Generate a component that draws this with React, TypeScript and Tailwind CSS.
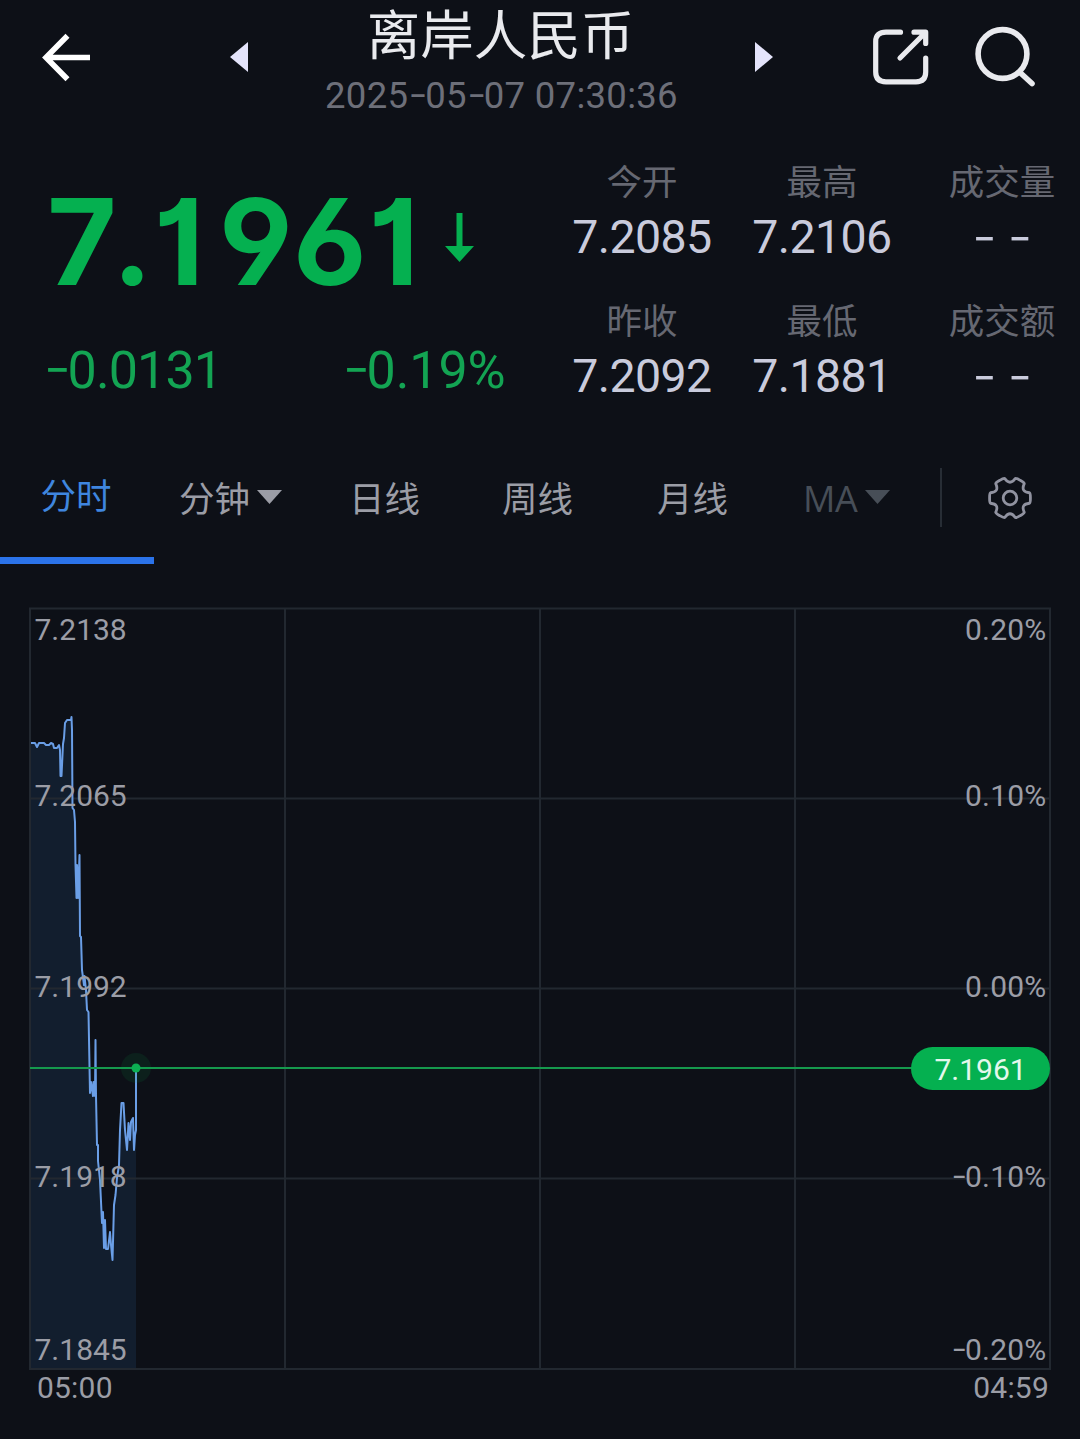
import type { ReactNode } from 'react';

const cjk = "font-['Noto_Sans_CJK_SC',sans-serif]";

/** Numeric text; minus signs use a wider, lighter dash than the digit face has. */
function Num({ text, className = '' }: { text: string; className?: string }) {
  return (
    <span className={`block whitespace-nowrap font-[Roboto,sans-serif] ${className}`}>
      {text.split(/(-)/).map((part, i) =>
        part === '-' ? (
          <span key={i} className="inline-block translate-y-[0.02em] font-[Inter,sans-serif] text-[1.18em] leading-[0.7] font-light tracking-[-0.06em]">-</span>
        ) : (
          part
        ),
      )}
    </span>
  );
}

function Header() {
  return (
    <header className="flex h-[130px] items-start pl-[41px]">
      <svg className="mt-[33px] h-[49px] w-[49px] shrink-0" viewBox="0 0 49 49" fill="none" stroke="#fff" strokeWidth="5.6">
        <path d="M26.5 2.8 5 24.5l21.5 21.7M5 24.5h44" />
      </svg>
      <svg className="mt-[42px] ml-[140px] h-[30px] w-[19px] shrink-0" viewBox="0 0 19 30" fill="#e4e4fb">
        <path d="M0 15 18 0v30z" />
      </svg>
      <div className="flex w-[505px] shrink-0 flex-col items-center">
        <h1 className={`mt-[5px] mr-[2px] text-[53.5px] leading-[53px] text-[#e9eaee] ${cjk}`}>离岸人民币</h1>
        <Num text="2025-05-07 07:30:36" className="mt-[19px] text-[36.5px] leading-[37px] tracking-[0.3px] text-[#6d6f79]" />
      </div>
      <svg className="mt-[42px] h-[30px] w-[19px] shrink-0" viewBox="0 0 19 30" fill="#e4e4fb">
        <path d="M19 15 1 0v30z" />
      </svg>
      <svg className="mt-[29px] ml-[100px] h-[56px] w-[56px] shrink-0" viewBox="0 0 56 56" fill="none" stroke="#e9eaee" strokeWidth="5.2" strokeLinecap="round" strokeLinejoin="round">
        <path d="M27.500 3.200H13Q2.700 3.200 2.700 12.500V43Q2.700 52.800 13 52.800H43Q52.700 52.800 52.700 43V29" />
        <path d="M41 3.200H52.700V14.500M52 4 27 29" />
      </svg>
      <svg className="mt-[26px] ml-[46px] h-[62px] w-[62px] shrink-0" viewBox="0 0 62 62" fill="none" stroke="#e9eaee" strokeWidth="5.6" strokeLinecap="round">
        <circle cx="27.500" cy="28" r="24.400" />
        <path d="M45 46.500 57 57.500" />
      </svg>
    </header>
  );
}

const stats = [
  ['今开', '7.2085'],
  ['最高', '7.2106'],
  ['成交量', '- -'],
  ['昨收', '7.2092'],
  ['最低', '7.1881'],
  ['成交额', '- -'],
];

function Quote() {
  return (
    <section className="flex h-[320px]">
      <div className="w-[552px] shrink-0 text-[#05b050]">
        <div className="mt-[52px] flex items-start pl-[47px]">
          <div className="font-[Inter,sans-serif] text-[120px] leading-[120px] font-bold whitespace-nowrap [font-feature-settings:'ss01','cv01']">
            <span className="tracking-[-4.500px]">7</span>
            <span className="tracking-[1px]">.</span>
            <span className="tracking-[15px]">1</span>
            <span className="tracking-[1.5px]">961</span>
          </div>
          <svg className="mt-[31px] ml-[25px] h-[49px] w-[29px]" viewBox="0 0 29 49" fill="#05b050">
            <path d="M11.500 0h6v33H29L14.500 49 0 33h11.500z" />
          </svg>
        </div>
        <div className="mt-[43px] flex pl-[43.5px] text-[#13a453]">
          <Num text="-0.0131" className="w-[299px] text-[52px] leading-[52px] tracking-[-0.9px]" />
          <Num text="-0.19%" className="text-[52px] leading-[52px] tracking-[-0.1px]" />
        </div>
      </div>
      <div className="mt-[32px] grid w-[540px] shrink-0 grid-cols-3 grid-rows-[139px_139px]">
        {stats.map(([label, value], i) => (
          <div key={i} className="flex flex-col items-center">
            <span className={`text-[35.5px] leading-[36px] text-[#666872] ${cjk}`}>{label}</span>
            <Num
              text={value}
              className={`mt-[16px] text-[46.5px] leading-[46px] tracking-[-0.6px] text-[#c9cbdc] ${value === '- -' ? 'translate-y-[2px] pr-[3px] [word-spacing:3px]' : ''}`}
            />
          </div>
        ))}
      </div>
    </section>
  );
}

function Caret({ className }: { className: string }) {
  return (
    <svg className={`h-[14px] w-[25px] shrink-0 ${className}`} viewBox="0 0 25 14" fill="currentColor">
      <path d="M0 0h25L12.500 14z" />
    </svg>
  );
}

function Tab({ children, className }: { children: ReactNode; className: string }) {
  return <div className={`flex shrink-0 text-[35.5px] leading-[36px] whitespace-nowrap ${cjk} ${className}`}>{children}</div>;
}

/** Outline of the six-tooth settings cog, centred on the origin. */
function cogPath() {
  const at = (deg: number, r: number) => {
    const a = (deg * Math.PI) / 180;
    return `${(Math.cos(a) * r).toFixed(2)} ${(Math.sin(a) * r).toFixed(2)}`;
  };
  let d = `M${at(-15, 20.2)}`;
  for (let k = 0; k < 6; k++) {
    const t = k * 60;
    d += `Q${at(t - 12, 21)} ${at(t, 20.4)}Q${at(t + 12, 21)} ${at(t + 15, 20.2)}Q${at(t + 30, 12)} ${at(t + 45, 20.2)}`;
  }
  return d + 'Z';
}

function Tabs() {
  return (
    <nav className="flex h-[114px] items-start text-[#9b9da6]">
      <div className="flex h-[114px] w-[154px] shrink-0 flex-col justify-between">
        <Tab className="mt-[26px] pl-[40.5px] text-[#3f86df]">分时</Tab>
        <div className="h-[7px] bg-[#2b73ea]" />
      </div>
      <Tab className="mt-[29px] w-[195px] pl-[25px]">
        分钟
        <Caret className="mt-[11px] ml-[7px]" />
      </Tab>
      <Tab className="mt-[29px] w-[153px]">日线</Tab>
      <Tab className="mt-[29px] w-[155px]">周线</Tab>
      <Tab className="mt-[29px] w-[146px]">月线</Tab>
      <div className="mt-[31px] flex w-[137px] shrink-0 font-['Open_Sans',sans-serif] text-[36px] leading-[36px] text-[#474e57]">
        <span className="tracking-[-0.5px]">MA</span>
        <Caret className="mt-[9px] ml-[8px]" />
      </div>
      <div className="mt-[18px] h-[59px] w-[2px] bg-[#272d35]" />
      <svg className="mt-[24px] ml-[44px] h-[48px] w-[48px] shrink-0" viewBox="-24 -24 48 48" fill="none" stroke="#9092a0" strokeWidth="2.800" strokeLinejoin="round">
        <path d={cogPath()} />
        <circle r="6.800" />
      </svg>
    </nav>
  );
}

const prices: [number, number][] = [
  [31, 743], [35, 743], [37, 747], [39, 743], [44, 743], [46, 745], [49, 745], [51, 743], [53, 744], [54, 748],
  [57, 748], [59, 745], [60, 750], [60.5, 776], [61.5, 776], [63, 744], [64, 738], [65, 723], [67, 720], [71, 720],
  [71.500, 717], [72, 730], [72.500, 808], [74, 810], [75, 822], [75.500, 865], [76.500, 898], [77, 865], [78, 898], [79.500, 855], [80, 936],
  [81, 937], [82, 970], [84, 985], [84.500, 976], [86, 990], [87, 1010], [88.500, 1012], [90, 1093], [91, 1082],
  [93, 1096], [93.500, 1082], [95, 1096], [95.500, 1040], [96, 1096], [97, 1145], [98, 1145], [98, 1161], [100, 1180], [102, 1223],
  [103, 1212], [104, 1248], [105, 1220], [106, 1249], [108, 1249], [110, 1232], [111, 1245], [112.500, 1260],
  [114, 1205], [115.500, 1195], [117, 1178], [119, 1165], [120, 1130], [121.500, 1103], [123.500, 1103], [125, 1130],
  [127, 1150], [128.500, 1123], [130, 1140], [131, 1122], [133, 1118], [134, 1150], [135, 1135], [136, 1130], [136, 1068],
];
const line = prices.map(([x, y]) => `${x} ${y}`).join('L');

const axis = [
  ['7.2138', '0.20%'],
  ['7.2065', '0.10%'],
  ['7.1992', '0.00%'],
  ['7.1918', '-0.10%'],
  ['7.1845', '-0.20%'],
];

function Chart() {
  return (
    <section className="mt-[43px] px-[29px]">
      <div className="relative h-[763px] w-[1022px]">
        <svg className="block h-[763px] w-[1022px]" viewBox="29 607 1022 763" fill="none">
          <path d={`M${line}V1368H31Z`} fill="#121e2e" />
          <path d="M30 608.500H1050V1369H30ZM285 608.500V1369M540 608.500V1369M795 608.500V1369M30 798.500H1050M30 988.500H1050M30 1178.500H1050" stroke="#222830" strokeWidth="2" />
          <path d={`M${line}`} stroke="#6a9ee6" strokeWidth="2" strokeLinejoin="round" />
          <path d="M30 1068H915" stroke="#15994d" strokeWidth="2" />
          <circle cx="136" cy="1068" r="15" fill="#05b050" fillOpacity="0.1" />
          <circle cx="136" cy="1068" r="4.500" fill="#0cb053" />
        </svg>
        <div className="absolute right-[4.5px] left-[5.5px] top-[2px] grid grid-rows-[166px_191px_190px_173px_41px] text-[30px] leading-[41px] text-[#9b9da6]">
          {axis.map(([price, pct]) => (
            <div key={price} className="flex justify-between">
              <Num text={price} />
              <Num text={pct} className="tracking-[0.2px]" />
            </div>
          ))}
        </div>
        <div className="absolute top-[439.5px] right-px flex h-[43px] w-[139px] items-center justify-center rounded-full bg-[#05b050]">
          <Num text="7.1961" className="mt-[3px] text-[30px] leading-[43px] text-[#e3f8ec]" />
        </div>
      </div>
      <div className="flex justify-between pr-[2px] pl-[8px] text-[30px] leading-[36px] tracking-[0.2px] text-[#9b9da6]">
        <Num text="05:00" />
        <Num text="04:59" />
      </div>
    </section>
  );
}

export default function App() {
  return (
    <main className="h-[1439px] w-[1080px] overflow-hidden bg-[#0d1017]">
      <Header />
      <Quote />
      <Tabs />
      <Chart />
    </main>
  );
}
